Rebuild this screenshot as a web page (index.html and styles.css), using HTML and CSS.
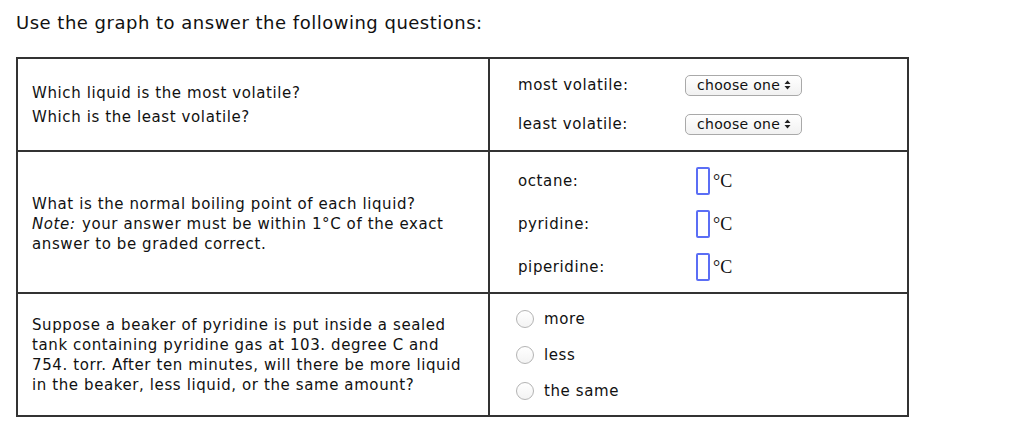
FILE: index.html
```html
<!DOCTYPE html>
<html lang="en">
<head>
  <meta charset="UTF-8">
  <title>Vapor Pressure Questions</title>
  <link rel="stylesheet" href="styles.css">
</head>
<body>
  <h1 class="prompt">Use the graph to answer the following questions:</h1>

  <table class="quiz">
    <colgroup>
      <col class="col-question">
      <col class="col-answer">
    </colgroup>
    <tr class="row-volatile">
      <td class="question">
        <p>Which liquid is the most volatile?</p>
        <p>Which is the least volatile?</p>
      </td>
      <td class="answer">
        <div class="pick-row">
          <span class="pick-label">most volatile:</span>
          <div class="select">choose one
            <svg width="7" height="10" viewBox="0 0 7 10"><path d="M3.5 0.5 L6.5 4 H0.5 Z M3.5 9.5 L6.5 6 H0.5 Z" fill="#222"/></svg>
          </div>
        </div>
        <div class="pick-row">
          <span class="pick-label">least volatile:</span>
          <div class="select">choose one
            <svg width="7" height="10" viewBox="0 0 7 10"><path d="M3.5 0.5 L6.5 4 H0.5 Z M3.5 9.5 L6.5 6 H0.5 Z" fill="#222"/></svg>
          </div>
        </div>
      </td>
    </tr>

    <tr class="row-boiling">
      <td class="question">
        <p>What is the normal boiling point of each liquid?<br>
        <em class="note">Note:</em> your answer must be within 1°C of the exact answer to be graded correct.</p>
      </td>
      <td class="answer">
        <div class="temp-row">
          <span class="temp-label">octane:</span>
          <input type="text" class="temp-input">
          <span class="unit">°C</span>
        </div>
        <div class="temp-row">
          <span class="temp-label">pyridine:</span>
          <input type="text" class="temp-input">
          <span class="unit">°C</span>
        </div>
        <div class="temp-row">
          <span class="temp-label">piperidine:</span>
          <input type="text" class="temp-input">
          <span class="unit">°C</span>
        </div>
      </td>
    </tr>

    <tr class="row-tank">
      <td class="question">
        <p>Suppose a beaker of pyridine is put inside a sealed tank containing pyridine gas at 103. degree C and 754. torr. After ten minutes, will there be more liquid in the beaker, less liquid, or the same amount?</p>
      </td>
      <td class="answer">
        <label class="radio-row"><span class="radio"></span>more</label>
        <label class="radio-row"><span class="radio"></span>less</label>
        <label class="radio-row"><span class="radio"></span>the same</label>
      </td>
    </tr>
  </table>
</body>
</html>
```

FILE: styles.css
```css
body {
  font-family: "DejaVu Sans", Verdana, sans-serif;
  color: #111;
  background: #fff;
  margin: 0;
  padding: 11px 16px 10px;
}
.prompt {
  font-size: 18px;
  letter-spacing: 0.5px;
  font-weight: normal;
  margin: 0 0 22px;
  line-height: 24px;
}
.quiz {
  border-collapse: collapse;
  table-layout: fixed;
  width: 893px;
  font-size: 15px;
  letter-spacing: 0.6px;
}
.col-question {
  width: 472px;
}
.quiz td {
  border: 2px solid #333;
  vertical-align: middle;
  padding: 0;
}
.question {
  padding-left: 14px !important;
  padding-right: 16px !important;
  line-height: 20px;
}
.question p {
  margin: 0;
}
.note {
  padding-right: 1px;
}
.row-volatile td {
  height: 91px;
}
.row-volatile .question p + p {
  margin-top: 4px;
}
.row-boiling td {
  height: 136px;
  padding-top: 4px;
}
.row-tank td {
  height: 121px;
}
.answer {
  padding-left: 28px !important;
}
.pick-row {
  display: flex;
  align-items: center;
  height: 21px;
}
.pick-row + .pick-row {
  margin-top: 18px;
}
.pick-label {
  width: 167px;
}
.select {
  display: flex;
  align-items: center;
  gap: 4px;
  box-sizing: border-box;
  width: 117px;
  height: 21px;
  padding: 0 0 0 11px;
  border: 1px solid #a9a9a9;
  border-radius: 5px;
  background: linear-gradient(#fff, #f1f1f1);
  font-size: 14px;
  letter-spacing: 0.3px;
}
.temp-row {
  display: flex;
  align-items: center;
  height: 28px;
}
.temp-row + .temp-row {
  margin-top: 15px;
}
.temp-label {
  width: 178px;
}
.temp-input {
  box-sizing: border-box;
  width: 14px;
  height: 28px;
  margin: 0;
  padding: 0;
  border: 2px solid #5b6ef5;
  border-radius: 2px;
}
.unit {
  font-family: "Liberation Serif", "Times New Roman", serif;
  font-size: 18px;
  letter-spacing: 0;
  margin-left: 3px;
}
.radio-row {
  display: flex;
  align-items: center;
  gap: 10px;
  height: 20px;
  margin-left: -2px;
}
.radio-row + .radio-row {
  margin-top: 16px;
}
.radio {
  box-sizing: border-box;
  width: 18px;
  height: 18px;
  border: 1px solid #b4b4b4;
  border-radius: 50%;
  background: linear-gradient(#fff, #f3f3f3);
}
```
